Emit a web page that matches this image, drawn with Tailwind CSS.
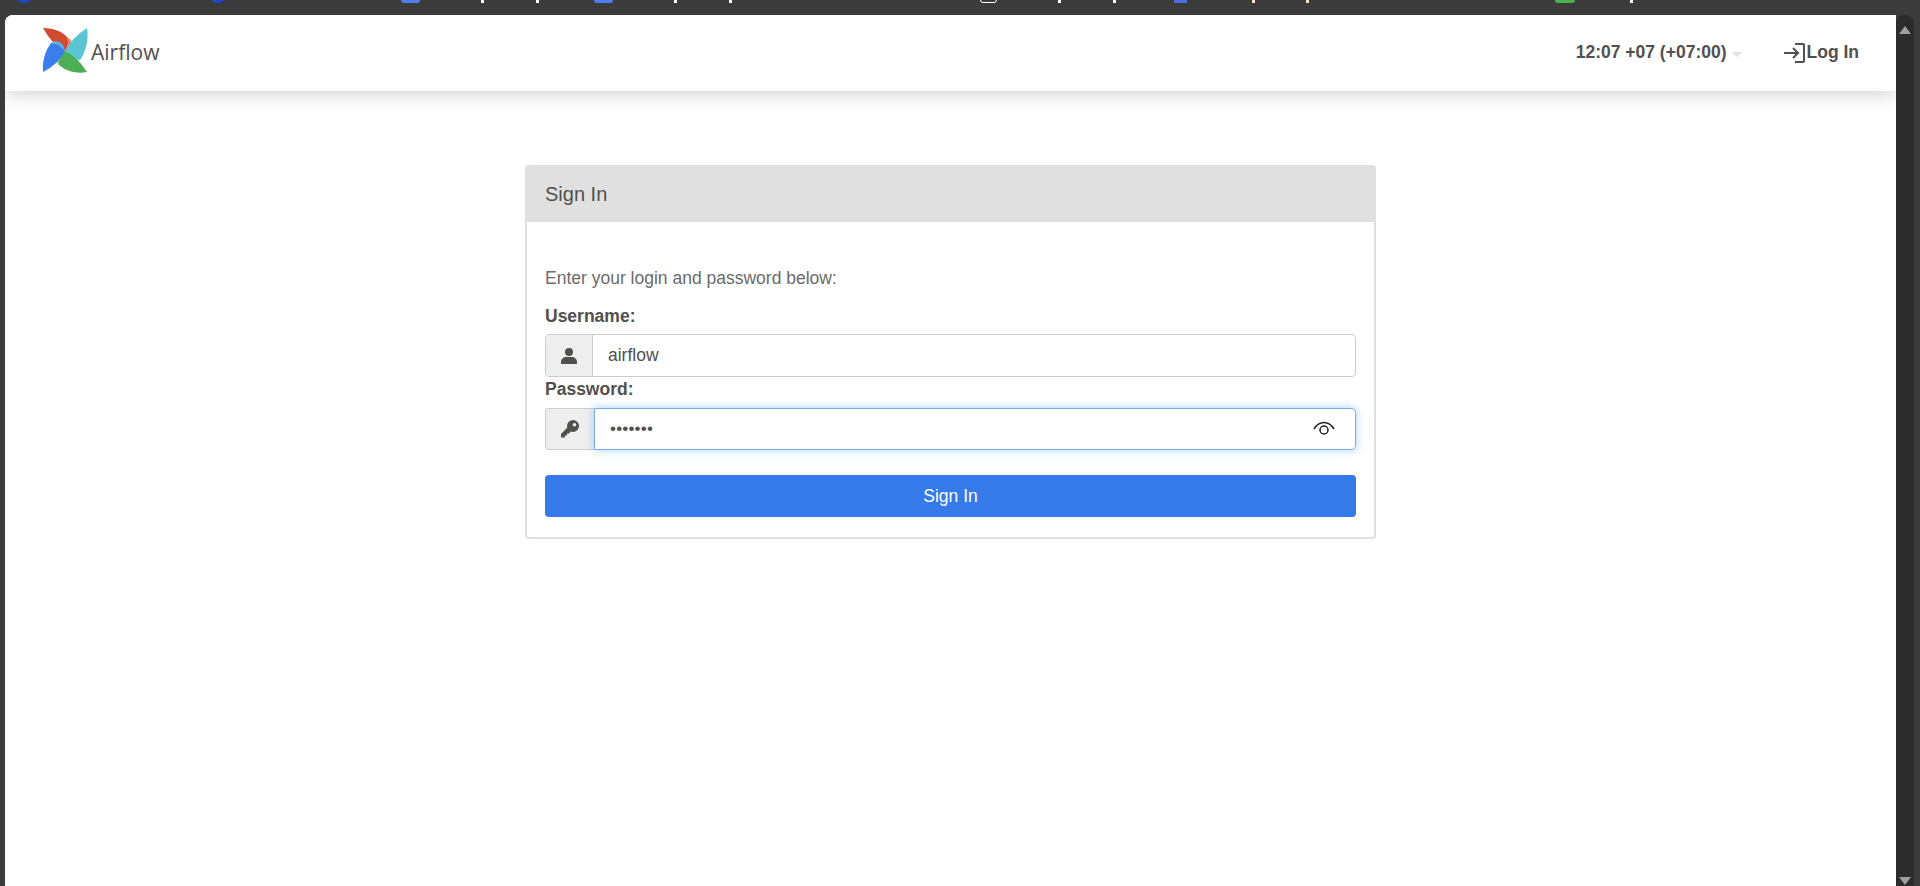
<!DOCTYPE html>
<html lang="en">
<head>
    <meta charset="UTF-8">
    <title>Airflow - Sign In</title>
    <script src="https://cdn.jsdelivr.net/npm/@tailwindcss/browser@4"></script>
</head>
<body class="h-[886px] overflow-hidden bg-[#3b3b3b] font-['Liberation_Sans',sans-serif] text-[#51504f]">
    <!-- browser bookmarks, cut off by the top of the window -->
    <div class="relative h-[15px] overflow-hidden">
        <div class="absolute left-[14px] top-[-17px] h-5 w-5 rounded-full bg-[#1c47c8]"></div>
        <div class="absolute left-[208px] top-[-17px] h-5 w-5 rounded-full bg-[#1c47c8]"></div>
        <div class="absolute left-[401px] top-[-6px] h-[9px] w-[19px] rounded-[3px] bg-[#4f7fee]"></div>
        <div class="absolute left-[594px] top-[-6px] h-[9px] w-[19px] rounded-[3px] bg-[#4f7fee]"></div>
        <div class="absolute left-[481px] top-0 h-[3px] w-[3px] bg-white"></div>
        <div class="absolute left-[536px] top-0 h-[3px] w-[3px] bg-white"></div>
        <div class="absolute left-[674px] top-0 h-[3px] w-[3px] bg-white"></div>
        <div class="absolute left-[729px] top-0 h-[3px] w-[3px] bg-white"></div>
        <div class="absolute left-[980px] top-[-6px] h-[9px] w-[17px] rounded-[3px] border border-white"></div>
        <div class="absolute left-[1058px] top-0 h-[3px] w-[3px] bg-white"></div>
        <div class="absolute left-[1113px] top-0 h-[3px] w-[3px] bg-white"></div>
        <div class="absolute left-[1174px] top-0 h-[3px] w-[13px] bg-[#4a6fdc]"></div>
        <div class="absolute left-[1252px] top-0 h-[3px] w-[3px] bg-[#f3e9c8]"></div>
        <div class="absolute left-[1306px] top-0 h-[3px] w-[3px] bg-[#f3e0c0]"></div>
        <div class="absolute left-[1555px] top-[-6px] h-[9px] w-5 rounded-[3px] bg-[#4caf50]"></div>
        <div class="absolute left-[1630px] top-0 h-[3px] w-[3px] bg-white"></div>
    </div>

    <div class="flex h-[871px] pl-[5px]">
        <div class="flex-1 overflow-hidden rounded-tl-lg bg-white">
            <nav class="flex h-[76px] items-center justify-between bg-white pl-[38px] pr-[37px] shadow-[0_2px_20px_rgba(0,0,0,0.2)]">
                <div class="mb-[5px] flex items-center gap-[2px]">
                    <svg class="h-[46px] w-[46px] overflow-visible" viewBox="0 0 46 46">
                        <path d="M22 23 Q9 16.500 0 0 C9 0 19 3 24 9 C26 14 25 19 22 23Z" fill="#d14b32"/>
                        <path d="M22 23 C25 19 26 14 24 9 C29 11 30 17 27 19Z" fill="#ee8166"/>
                        <path d="M22 23 Q28.500 10 44 0 C46 10 43 24 37 32 C31 31 26 28 22 23Z" fill="#5bc5d4"/>
                        <path d="M22 23 C26 28 31 31 37 32 C33 34 28 33 25 30Z" fill="#62e0ec"/>
                        <path d="M22 23 Q35 29.500 44 44 C35 46 24 44 16 37 C15 32 18 27 22 23Z" fill="#4cae55"/>
                        <path d="M22 23 C18 27 15 32 16 37 C12 34 12 29 14 26Z" fill="#7bd479"/>
                        <path d="M22 23 Q15.500 36 0 44 C-1 34 2 23 8 15 C13 15 18 18 22 23Z" fill="#3b7deb"/>
                        <path d="M22 23 C18 18 13 15 8 15 C11 12 17 13 20 17Z" fill="#5cb4ee"/>
                    </svg>
                    <span class="mt-[4px] font-['Open_Sans',sans-serif] text-[21px] leading-none">Airflow</span>
                </div>
                <div class="mb-[1px] flex items-center text-[17.5px] font-bold">
                    <span>12:07 +07 (+07:00)</span>
                    <span class="ml-[5px] mt-[3px] h-0 w-0 border-x-[5px] border-t-[5px] border-x-transparent border-t-[#e3dbe6]"></span>
                    <a class="ml-[41px] flex items-center">
                        <svg class="h-6 w-6" viewBox="0 0 24 24" fill="none" stroke="#51504f" stroke-width="2">
                            <path d="M1 12h14M10 7l5 5-5 5M12 3h8a1 1 0 0 1 1 1v16a1 1 0 0 1-1 1h-8"/>
                        </svg>
                        Log In
                    </a>
                </div>
            </nav>

            <div class="ml-[520px] mt-[74px] w-[851px] rounded border-2 border-[#e0e0e0]">
                <div class="flex h-[55px] items-center bg-[#e0e0e0] px-[18px] pb-[2px] text-[20px]">Sign In</div>
                <div class="px-[18px] pb-[20px] pt-[45px]">
                    <p class="text-[17.5px] leading-[22px] text-[#6b6b6b]">Enter your login and password below:</p>
                    <label class="mt-[16px] block text-[17.5px] font-bold leading-[22px]">Username:</label>
                    <div class="mt-[7px] flex h-[43px] rounded border border-[#ccc]">
                        <span class="flex w-[47px] items-center justify-center rounded-l-[3px] border-r border-[#ccc] bg-[#eee]">
                            <svg class="h-4 w-4" viewBox="0 0 16 16" fill="#51504f">
                                <circle cx="8" cy="4" r="4"/>
                                <path d="M0 16v-2c0-3 2.500-5 5-5h6c2.500 0 5 2 5 5v2z"/>
                            </svg>
                        </span>
                        <span class="flex flex-1 items-center pl-[15px] text-[17.5px]">airflow</span>
                    </div>
                    <label class="block text-[17.5px] font-bold leading-[24px]">Password:</label>
                    <div class="mt-[7px] flex h-[42px]">
                        <span class="flex w-[49px] items-center justify-center rounded-l border border-r-0 border-[#ccc] bg-[#eee]">
                            <svg class="h-5 w-5" viewBox="0 0 20 20" fill="#51504f">
                                <path fill-rule="evenodd" d="M13 1a6 6 0 0 1 0 12c-.8 0-1.500-.1-2.200-.4L9 14.500H7V16.500H5V18.500H1V15L7.400 8.500C7.100 7.800 7 7 7 7a6 6 0 0 1 6-6zm1.500 3a1.800 1.800 0 1 0 0 3.600 1.800 1.800 0 0 0 0-3.600z"/>
                            </svg>
                        </span>
                        <div class="flex flex-1 items-center justify-between rounded-r border border-[#7aaeea] pl-[15px] pr-[20px] shadow-[0_0_8px_rgba(102,175,233,0.6)]">
                            <span class="text-[17px] tracking-[0.2px]">•••••••</span>
                            <svg class="h-5 w-[22px]" viewBox="0 0 22 20" fill="none" stroke="#222" stroke-width="1.500">
                                <path d="M1 10C4 5 7 3.500 11 3.500S18 5 21 10"/>
                                <circle cx="11" cy="11" r="4"/>
                            </svg>
                        </div>
                    </div>
                    <button class="mt-[25px] block h-[42px] w-full rounded bg-[#3679e8] text-[17.5px] text-white">Sign In</button>
                </div>
            </div>
        </div>

        <!-- scrollbar -->
        <div class="flex w-[24px] bg-[#3b3b3b]">
            <div class="flex w-[18px] flex-col items-center justify-between rounded-t-lg bg-[#2c2c2c] py-[11px] pb-[1px]">
                <span class="h-0 w-0 border-x-[6px] border-b-[8px] border-x-transparent border-b-[#a0a0a0]"></span>
                <span class="h-0 w-0 border-x-[6px] border-t-[8px] border-x-transparent border-t-[#a0a0a0]"></span>
            </div>
        </div>
    </div>
</body>
</html>
